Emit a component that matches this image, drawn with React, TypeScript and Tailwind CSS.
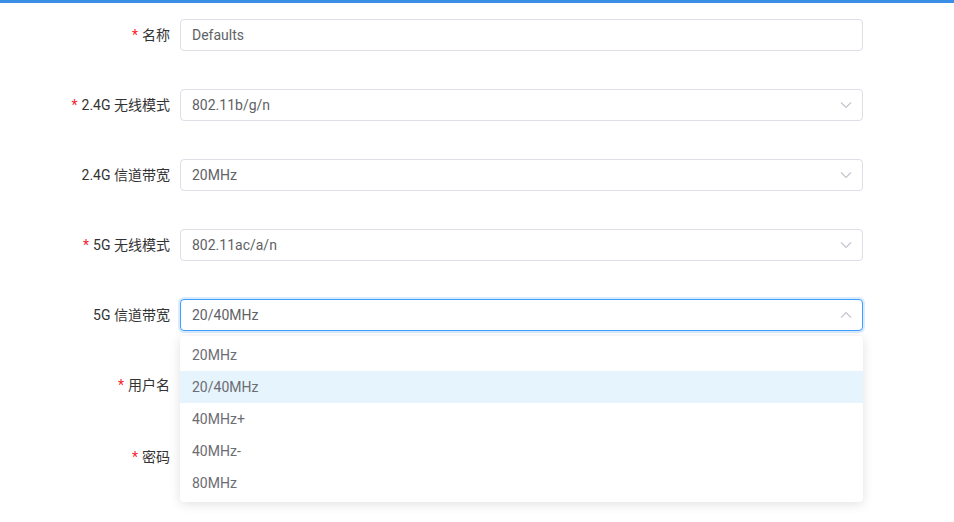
import React from "react";

type Row = {
  label: string;
  required?: boolean;
  value?: string;
  select?: boolean;
  open?: boolean;
  extraTop?: boolean;
};

const ROWS: Row[] = [
  { label: "名称", required: true, value: "Defaults" },
  { label: "2.4G 无线模式", required: true, value: "802.11b/g/n", select: true },
  { label: "2.4G 信道带宽", value: "20MHz", select: true },
  { label: "5G 无线模式", required: true, value: "802.11ac/a/n", select: true },
  { label: "5G 信道带宽", value: "20/40MHz", select: true, open: true },
  { label: "用户名", required: true, value: "" },
  { label: "密码", required: true, value: "", extraTop: true },
];

const OPTIONS = ["20MHz", "20/40MHz", "40MHz+", "40MHz-", "80MHz"];

function Chevron({ up }: { up?: boolean }) {
  return (
    <svg width="14" height="14" viewBox="0 0 14 14" className="text-[#c0c4cc]">
      <path
        d={up ? "M2 9.5 L7 4.5 L12 9.5" : "M2 4.5 L7 9.5 L12 4.5"}
        fill="none"
        stroke="currentColor"
        strokeWidth="1.1"
      />
    </svg>
  );
}

function FormRow({ row }: { row: Row }) {
  return (
    <div className={`flex items-center h-8 ${row.extraTop ? "mt-[40px]" : "mt-[38px]"} first:mt-0`}>
      <label className="w-[180px] pr-[10px] text-right text-[14px] text-[#333]">
        {row.required && <span className="text-[#f5222d] mr-1">*</span>}
        {row.label}
      </label>
      <div className="relative">
        <div
          className={`w-[683px] h-8 rounded-[4px] border bg-white flex items-center pl-[11px] pr-[9px] text-[14px] text-[#606266] ${
            row.open ? "border-[#409eff] shadow-[0_0_0_2px_rgba(64,158,255,0.2)]" : "border-[#dcdfe6]"
          }`}
        >
          <span className="flex-1">{row.value}</span>
          {row.select && <Chevron up={row.open} />}
        </div>
        {row.open && (
          <div className="absolute left-0 top-[37px] z-10 w-[683px] rounded-[4px] bg-white py-[3px] shadow-[0_2px_12px_rgba(0,0,0,0.12)]">
            {OPTIONS.map((o) => (
              <div
                key={o}
                className={`h-8 flex items-center px-[12px] text-[14px] text-[#6b6d72] ${
                  o === row.value ? "bg-[#e6f4fd]" : ""
                }`}
              >
                {o}
              </div>
            ))}
          </div>
        )}
      </div>
    </div>
  );
}

export default function App() {
  return (
    <div
      className="w-[954px] h-[522px] bg-white overflow-hidden"
      style={{ fontFamily: 'Roboto, "Noto Sans CJK SC", sans-serif' }}
    >
      <div className="h-[3px] bg-[#3a8ee6]" />
      <div className="pt-[16px] flex flex-col">
        {ROWS.map((r) => (
          <FormRow key={r.label} row={r} />
        ))}
      </div>
    </div>
  );
}
